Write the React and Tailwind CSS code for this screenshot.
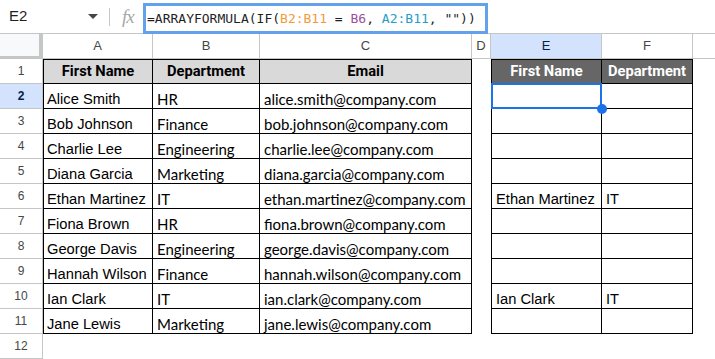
import React from 'react';

const people = [
  ['Alice Smith', 'HR', 'alice.smith@company.com'],
  ['Bob Johnson', 'Finance', 'bob.johnson@company.com'],
  ['Charlie Lee', 'Engineering', 'charlie.lee@company.com'],
  ['Diana Garcia', 'Marketing', 'diana.garcia@company.com'],
  ['Ethan Martinez', 'IT', 'ethan.martinez@company.com'],
  ['Fiona Brown', 'HR', 'fiona.brown@company.com'],
  ['George Davis', 'Engineering', 'george.davis@company.com'],
  ['Hannah Wilson', 'Finance', 'hannah.wilson@company.com'],
  ['Ian Clark', 'IT', 'ian.clark@company.com'],
  ['Jane Lewis', 'Marketing', 'jane.lewis@company.com'],
];

// rows where B = B6 ("IT") show up in E:F
const matches = { 4: ['Ethan Martinez', 'IT'], 8: ['Ian Clark', 'IT'] };

const arial = "font-['Liberation_Sans',Arial,sans-serif]";
const calibri = "font-['Lato',sans-serif]";

const RowHeader = ({ n, active }) => (
  <div
    className={`w-[43px] shrink-0 flex items-center justify-center border-r border-b border-[#c4c7c5] text-[12px] ${arial} ${
      active ? 'bg-[#d3e3fd] font-bold text-[#041e49]' : 'bg-white text-[#444746]'
    }`}
  >
    {n}
  </div>
);

const ColHeader = ({ label, w, active }) => (
  <div
    className={`${w} shrink-0 flex items-center justify-center border-r border-b border-[#c4c7c5] text-[13px] ${arial} ${
      active ? 'bg-[#d3e3fd] text-[#0b1f44]' : 'bg-white text-[#444746]'
    }`}
  >
    {label}
  </div>
);

export default function App() {
  return (
    <div className="w-[715px] h-[359px] overflow-hidden bg-white text-black">
      {/* Formula bar */}
      <div className="flex h-[34px] border-b border-[#c4c7c5]">
        <div className="w-[143px] shrink-0 flex items-center pl-[9px]">
          <span className={`w-[79px] text-[15px] text-[#1f1f1f] ${arial}`}>E2</span>
          <svg width="10" height="5" viewBox="0 0 10 5">
            <path d="M0 0h10L5 5z" fill="#444746" />
          </svg>
          <div className="ml-[11px] w-px h-[18px] bg-[#c4c7c5]" />
          <span className="ml-[12px] text-[19px] italic text-[#a8a8a8] font-['Liberation_Serif',serif] tracking-[-1px] leading-none">
            fx
          </span>
        </div>
        <div className="w-[345px] h-[31px] mt-[3px] border-[3px] border-[#63a2ea] flex items-center pl-px font-['DejaVu_Sans_Mono',monospace] text-[13px] text-[#1f1f1f] whitespace-pre">
          =ARRAYFORMULA(IF(<span className="text-[#f29b3c]">B2:B11</span> = <span className="text-[#9c4f9a]">B6</span>, <span className="text-[#1f9fc7]">A2:B11</span>, ""))
        </div>
      </div>

      {/* Column headers */}
      <div className="flex h-[25px]">
        <div className="w-[43px] shrink-0 bg-[#f8f9fa] border-r-4 border-b-[3px] border-[#c4c7c5]" />
        <ColHeader label="A" w="w-[110px]" />
        <ColHeader label="B" w="w-[107px]" />
        <ColHeader label="C" w="w-[212px]" />
        <ColHeader label="D" w="w-[19px]" />
        <ColHeader label="E" w="w-[111px]" active />
        <ColHeader label="F" w="w-[91px]" />
        <div className="flex-1 border-b border-[#c4c7c5]" />
      </div>

      {/* Row 1: headers */}
      <div className="flex h-[25px]">
        <RowHeader n={1} />
        <div className="w-[110px] shrink-0 flex items-center justify-center bg-[#d9d9d9] border border-black font-['Roboto',sans-serif] font-bold text-[14.7px]">
          First Name
        </div>
        <div className="w-[107px] shrink-0 flex items-center justify-center bg-[#d9d9d9] border-y border-r border-black font-['Roboto',sans-serif] font-bold text-[14.7px]">
          Department
        </div>
        <div className="w-[212px] shrink-0 flex items-center justify-center bg-[#d9d9d9] border-y border-r border-black font-['Roboto',sans-serif] font-bold text-[14.7px]">
          Email
        </div>
        <div className="w-[19px] shrink-0" />
        <div className="w-[111px] shrink-0 flex items-center justify-center bg-[#666666] text-white border border-black font-['Roboto',sans-serif] font-bold text-[14.7px]">
          First Name
        </div>
        <div className="w-[91px] shrink-0 flex items-center justify-center bg-[#666666] text-white border-y border-r border-black font-['Roboto',sans-serif] font-bold text-[14.7px]">
          Department
        </div>
      </div>

      {/* Rows 2-11 */}
      {people.map(([name, dept, email], i) => {
        const hit = matches[i];
        return (
          <div key={name} className="flex h-[25px]">
            <RowHeader n={i + 2} active={i === 0} />
            <div className={`w-[110px] shrink-0 flex items-end pl-[3px] border-x border-b border-black text-[14.7px] leading-[18px] ${arial}`}>
              {name}
            </div>
            <div className={`w-[107px] shrink-0 flex items-end pl-[4px] border-r border-b border-black text-[15px] leading-[18px] ${calibri}`}>
              {dept}
            </div>
            <div className={`w-[212px] shrink-0 flex items-end pl-[4px] border-r border-b border-black text-[15px] leading-[18px] ${calibri}`}>
              {email}
            </div>
            <div className="w-[19px] shrink-0" />
            <div className={`relative w-[111px] shrink-0 flex items-end pl-[4px] border-x border-b border-black text-[14.7px] leading-[18px] ${arial}`}>
              {hit ? hit[0] : ''}
              {i === 0 && (
                <>
                  <div className="absolute -left-px -top-px -right-px -bottom-px border-2 border-[#1a73e8]" />
                  <div className="absolute -right-[6px] -bottom-[6px] w-[10px] h-[10px] rounded-full bg-[#1a73e8] z-10" />
                </>
              )}
            </div>
            <div className={`w-[91px] shrink-0 flex items-end pl-[4px] border-r border-b border-black text-[14.7px] leading-[18px] ${arial}`}>
              {hit ? hit[1] : ''}
            </div>
          </div>
        );
      })}

      {/* Row 12 */}
      <div className="flex h-[25px]">
        <RowHeader n={12} />
      </div>
    </div>
  );
}
